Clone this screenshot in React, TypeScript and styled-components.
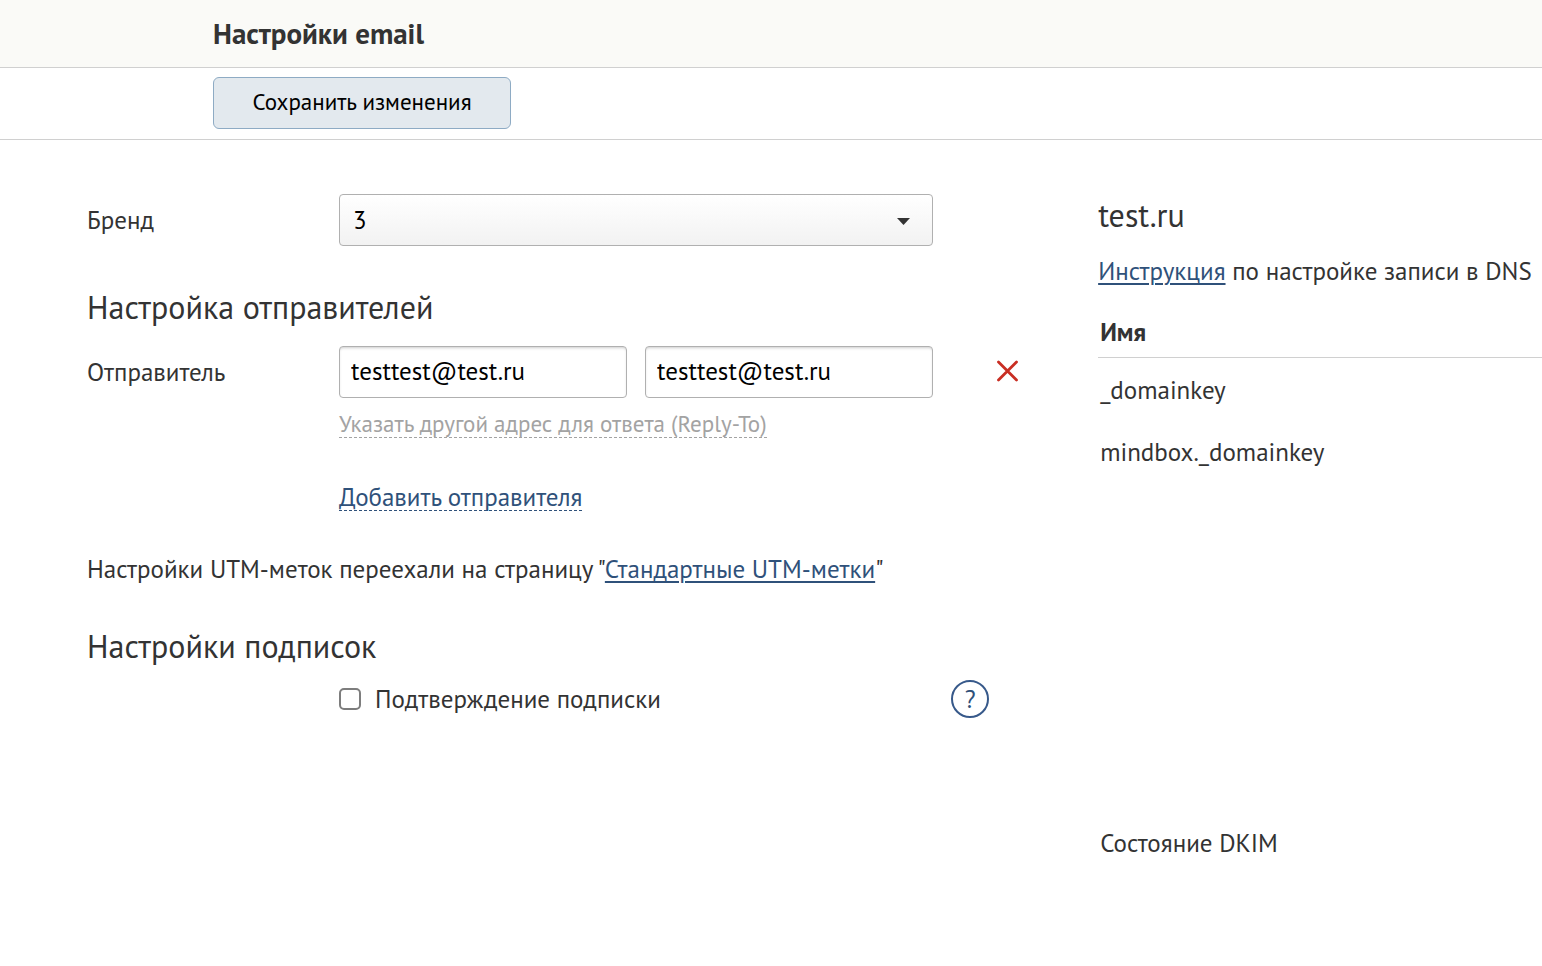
import React from "react";
import styled, { createGlobalStyle } from "styled-components";

const GlobalStyle = createGlobalStyle`
  *, *::before, *::after { box-sizing: border-box; }
  body {
    margin: 0;
    background: #fff;
    color: #333;
    font-family: "PT Sans", "Noto Sans", sans-serif;
    font-size: 25px;
    line-height: 32px;
    overflow-x: hidden;
  }
  button, input, select { font: inherit; margin: 0; }
  h1, h2, p { margin: 0; }
`;

const Header = styled.header`
  padding: 17px 213px 18px;
  background: #fafaf7;
  border-bottom: 1px solid #d0d0d0;
`;

const Title = styled.h1`
  font-size: 29px;
  line-height: 32px;
  font-weight: 700;
`;

const Toolbar = styled.div`
  padding: 9px 213px 10px;
  border-bottom: 1px solid #d0d0d0;
`;

const SaveButton = styled.button`
  width: 298px;
  height: 52px;
  padding: 0 0 2px;
  border: 1px solid #8eabc4;
  border-radius: 6px;
  background: #e3e9ee;
  color: #000;
  font-size: 23px;
  white-space: nowrap;
`;

const Main = styled.main`
  display: grid;
  grid-template-columns: 21fr 10fr;
  column-gap: 79px;
  padding: 54px 0 0 87px;
`;

const Form = styled.form`
  min-width: 0;
`;

const Row = styled.div`
  display: grid;
  grid-template-columns: 252px minmax(0, 1fr) 86px;
  align-items: center;
`;

const Label = styled.label`
  white-space: nowrap;
`;

const SelectBox = styled.div`
  position: relative;
`;

const Select = styled.select`
  appearance: none;
  display: block;
  width: 100%;
  height: 52px;
  padding: 0 48px 0 13px;
  border: 1px solid #b0b0b0;
  border-radius: 4px;
  background: linear-gradient(#fff, #f2f2f2);
  color: #000;
`;

const Caret = styled.svg`
  position: absolute;
  right: 23px;
  top: 24px;
  pointer-events: none;
`;

const Heading = styled.h2<{ $top: number; $bottom: number }>`
  margin: ${(p) => p.$top}px 0 ${(p) => p.$bottom}px;
  font-size: 32px;
  line-height: 40px;
  font-weight: 400;
  white-space: nowrap;
`;

const Pair = styled.div`
  display: grid;
  grid-template-columns: 1fr 1fr;
  gap: 18px;
`;

const TextInput = styled.input`
  width: 100%;
  height: 52px;
  padding: 0 11px 2px;
  border: 1px solid #b0b0b0;
  border-radius: 4px;
  background: #fff;
  box-shadow: inset 0 2px 3px -1px #ccc;
  color: #000;
`;

const RemoveButton = styled.button`
  display: flex;
  justify-self: end;
  padding: 0 0 2px;
  border: 0;
  background: none;
`;

const Indented = styled.div<{ $top: number }>`
  display: flex;
  margin: ${(p) => p.$top}px 0 0 252px;
`;

const ActionLink = styled.button<{ $muted?: boolean }>`
  padding: 0;
  border: 0;
  border-bottom: 1px dashed currentColor;
  background: none;
  color: ${(p) => (p.$muted ? "#a3a3a3" : "#2f517a")};
  font-size: ${(p) => (p.$muted ? 23 : 25)}px;
  line-height: 26px;
  white-space: nowrap;
`;

const Note = styled.p`
  margin-top: 42px;
  white-space: nowrap;
`;

const Link = styled.a`
  color: #2f517a;
  text-decoration: underline;
  text-decoration-thickness: 2px;
  text-underline-offset: 3px;
`;

const CheckLabel = styled.label`
  display: flex;
  grid-column: 2;
  align-items: center;
  gap: 14px;
  white-space: nowrap;
`;

const Checkbox = styled.input`
  appearance: none;
  flex: none;
  width: 22px;
  height: 22px;
  border: 2px solid #7d7d7d;
  border-radius: 5px;
  background: #fff;
`;

const HelpButton = styled.button`
  width: 38px;
  height: 38px;
  margin-left: 18px;
  padding: 0;
  border: 2px solid #37598a;
  border-radius: 50%;
  background: none;
  color: #2f517a;
  line-height: 32px;
`;

const Domain = styled.aside`
  min-width: 0;
  overflow: hidden;
  white-space: nowrap;
`;

const DomainName = styled.h2`
  margin: 1px 0 20px;
  font-size: 32px;
  line-height: 40px;
  font-weight: 400;
`;

const Records = styled.table`
  width: 100%;
  margin-top: 29px;
  border-collapse: collapse;

  th, td {
    padding: 0 2px;
    text-align: left;
    vertical-align: top;
  }
  th {
    height: 41px;
    border-bottom: 1px solid #d0d0d0;
  }
  td { padding-top: 16px; }
`;

const Record = styled.tr<{ $tall?: boolean }>`
  height: ${(p) => (p.$tall ? 391 : 62)}px;

  &:first-child { height: 63px; }
`;

const records = [
  { name: "_domainkey" },
  { name: "mindbox._domainkey", tall: true },
  { name: "Состояние DKIM" },
];

export default function App() {
  return (
    <>
      <GlobalStyle />
      <Header>
        <Title>Настройки email</Title>
      </Header>
      <Toolbar>
        <SaveButton type="submit" form="email-settings">
          Сохранить изменения
        </SaveButton>
      </Toolbar>
      <Main>
        <Form id="email-settings" onSubmit={(e) => e.preventDefault()}>
          <Row>
            <Label htmlFor="brand">Бренд</Label>
            <SelectBox>
              <Select id="brand" defaultValue="3">
                <option value="3">3</option>
              </Select>
              <Caret width="13" height="7" viewBox="0 0 13 7" aria-hidden="true">
                <path d="M0 0h13L6.5 7z" fill="#333" />
              </Caret>
            </SelectBox>
          </Row>

          <Heading $top={41} $bottom={19}>Настройка отправителей</Heading>
          <Row>
            <Label htmlFor="sender-name">Отправитель</Label>
            <Pair>
              <TextInput id="sender-name" defaultValue="testtest@test.ru" />
              <TextInput aria-label="Email отправителя" defaultValue="testtest@test.ru" />
            </Pair>
            <RemoveButton type="button" aria-label="Удалить отправителя">
              <svg width="23" height="22" viewBox="0 0 23 22" aria-hidden="true">
                <path d="M2.5 2L20.5 20M20.5 2L2.5 20" stroke="#c92e23" strokeWidth="2.8" strokeLinecap="round" />
              </svg>
            </RemoveButton>
          </Row>
          <Indented $top={13}>
            <ActionLink type="button" $muted>
              Указать другой адрес для ответа (Reply-To)
            </ActionLink>
          </Indented>
          <Indented $top={46}>
            <ActionLink type="button">Добавить отправителя</ActionLink>
          </Indented>

          <Note>
            Настройки UTM-меток переехали на страницу "<Link href="#utm">Стандартные UTM-метки</Link>"
          </Note>

          <Heading $top={41} $bottom={14}>Настройки подписок</Heading>
          <Row>
            <CheckLabel>
              <Checkbox type="checkbox" />
              Подтверждение подписки
            </CheckLabel>
            <HelpButton type="button">?</HelpButton>
          </Row>
        </Form>

        <Domain>
          <DomainName>test.ru</DomainName>
          <p>
            <Link href="#dns">Инструкция</Link> по настройке записи в DNS
          </p>
          <Records>
            <thead>
              <tr>
                <th scope="col">Имя</th>
              </tr>
            </thead>
            <tbody>
              {records.map((r) => (
                <Record key={r.name} $tall={r.tall}>
                  <td>{r.name}</td>
                </Record>
              ))}
            </tbody>
          </Records>
        </Domain>
      </Main>
    </>
  );
}
